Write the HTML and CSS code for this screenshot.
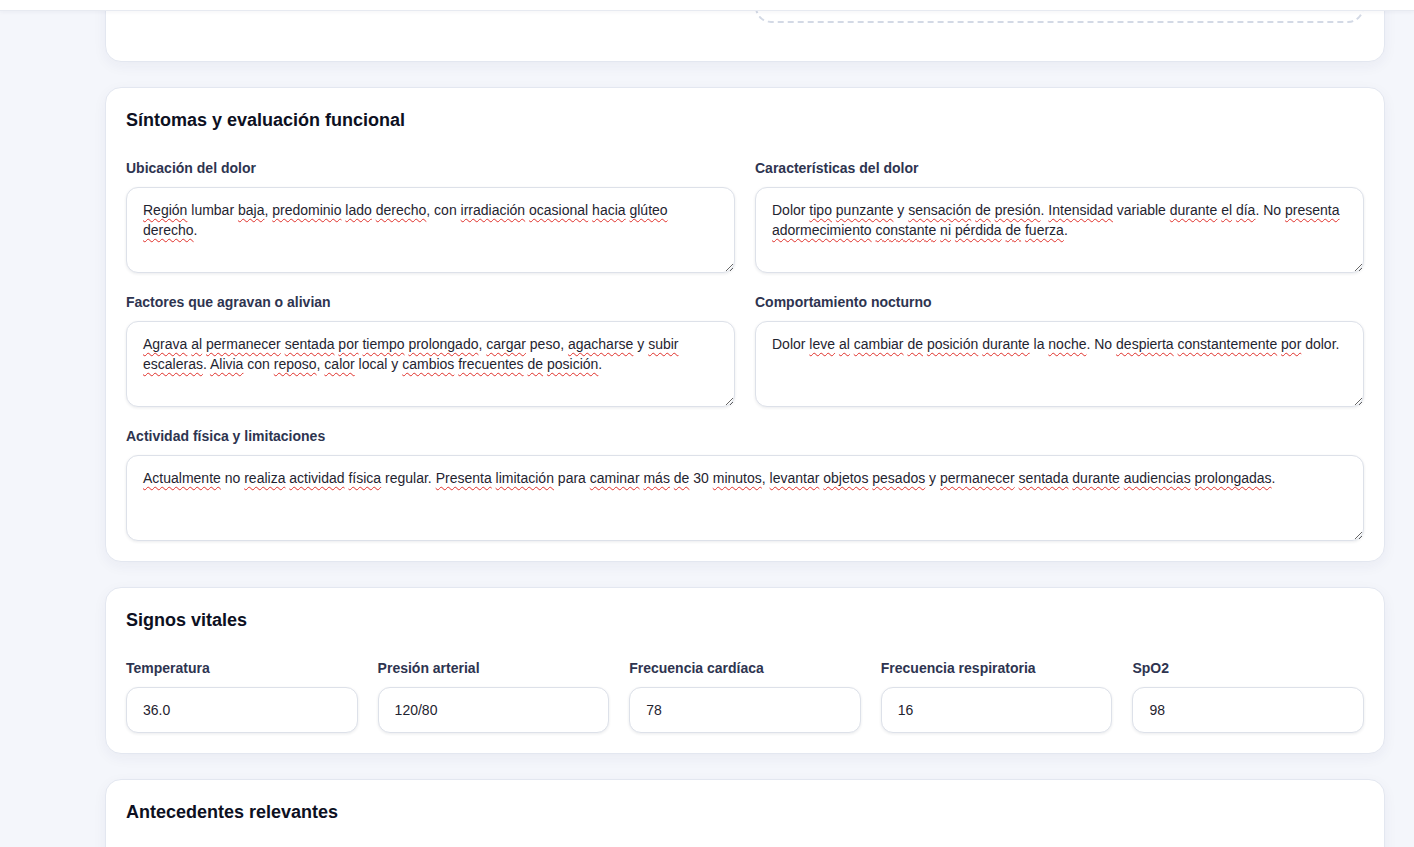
FILE: index.html
```html
<!DOCTYPE html>
<html lang="es">
<head>
    <meta charset="UTF-8">
    <meta name="viewport" content="width=device-width, initial-scale=1.0">
    <title>Historia clínica</title>
    <link rel="stylesheet" href="styles.css">
</head>
<body>
    <div class="topbar"></div>

    <main class="pagina">
        <section class="tarjeta tarjeta-inicio">
            <div class="grid-2">
                <div class="col-vacia"></div>
                <div class="zona-archivo"></div>
            </div>
        </section>

        <section class="tarjeta">
            <h2 class="titulo">Síntomas y evaluación funcional</h2>
            <div class="grid-2">
                <div class="campo">
                    <label>Ubicación del dolor</label>
                    <div class="area" role="textbox"><span class="sp">Región</span> lumbar <span class="sp">baja</span>, <span class="sp">predominio</span> <span class="sp">lado</span> <span class="sp">derecho</span>, con <span class="sp">irradiación</span> <span class="sp">ocasional</span> <span class="sp">hacia</span> <span class="sp">glúteo</span> <span class="sp">derecho</span>.</div>
                </div>
                <div class="campo">
                    <label>Características del dolor</label>
                    <div class="area" role="textbox">Dolor <span class="sp">tipo</span> <span class="sp">punzante</span> y <span class="sp">sensación</span> <span class="sp">de</span> <span class="sp">presión</span>. <span class="sp">Intensidad</span> variable <span class="sp">durante</span> <span class="sp">el</span> <span class="sp">día</span>. No <span class="sp">presenta</span> <span class="sp">adormecimiento</span> <span class="sp">constante</span> <span class="sp">ni</span> <span class="sp">pérdida</span> <span class="sp">de</span> <span class="sp">fuerza</span>.</div>
                </div>
                <div class="campo">
                    <label>Factores que agravan o alivian</label>
                    <div class="area" role="textbox"><span class="sp">Agrava</span> <span class="sp">al</span> <span class="sp">permanecer</span> <span class="sp">sentada</span> <span class="sp">por</span> <span class="sp">tiempo</span> <span class="sp">prolongado</span>, <span class="sp">cargar</span> peso, <span class="sp">agacharse</span> y <span class="sp">subir</span> <span class="sp">escaleras</span>. <span class="sp">Alivia</span> con <span class="sp">reposo</span>, <span class="sp">calor</span> local y <span class="sp">cambios</span> <span class="sp">frecuentes</span> <span class="sp">de</span> <span class="sp">posición</span>.</div>
                </div>
                <div class="campo">
                    <label>Comportamiento nocturno</label>
                    <div class="area" role="textbox">Dolor <span class="sp">leve</span> <span class="sp">al</span> <span class="sp">cambiar</span> <span class="sp">de</span> <span class="sp">posición</span> <span class="sp">durante</span> la <span class="sp">noche</span>. No <span class="sp">despierta</span> <span class="sp">constantemente</span> <span class="sp">por</span> dolor.</div>
                </div>
                <div class="campo ancho">
                    <label>Actividad física y limitaciones</label>
                    <div class="area" role="textbox"><span class="sp">Actualmente</span> no <span class="sp">realiza</span> <span class="sp">actividad</span> <span class="sp">física</span> regular. <span class="sp">Presenta</span> <span class="sp">limitación</span> para <span class="sp">caminar</span> <span class="sp">más</span> <span class="sp">de</span> 30 <span class="sp">minutos</span>, <span class="sp">levantar</span> <span class="sp">objetos</span> <span class="sp">pesados</span> y <span class="sp">permanecer</span> <span class="sp">sentada</span> <span class="sp">durante</span> <span class="sp">audiencias</span> <span class="sp">prolongadas</span>.</div>
                </div>
            </div>
        </section>

        <section class="tarjeta">
            <h2 class="titulo">Signos vitales</h2>
            <div class="grid-5">
                <div class="campo">
                    <label>Temperatura</label>
                    <input class="entrada" type="text" value="36.0">
                </div>
                <div class="campo">
                    <label>Presión arterial</label>
                    <input class="entrada" type="text" value="120/80">
                </div>
                <div class="campo">
                    <label>Frecuencia cardíaca</label>
                    <input class="entrada" type="text" value="78">
                </div>
                <div class="campo">
                    <label>Frecuencia respiratoria</label>
                    <input class="entrada" type="text" value="16">
                </div>
                <div class="campo">
                    <label>SpO2</label>
                    <input class="entrada" type="text" value="98">
                </div>
            </div>
        </section>

        <section class="tarjeta">
            <h2 class="titulo">Antecedentes relevantes</h2>
            <div class="grid-2">
                <div class="area vacia" role="textbox" aria-label="Antecedentes personales"></div>
                <div class="area vacia" role="textbox" aria-label="Antecedentes familiares"></div>
            </div>
        </section>
    </main>
</body>
</html>
```

FILE: styles.css
```css
* {
    margin: 0;
    padding: 0;
    box-sizing: border-box;
}
body {
    font-family: 'Liberation Sans', Arial, sans-serif;
    background-color: #f4f6fb;
    color: #1f2430;
}
.topbar {
    position: fixed;
    top: 0;
    left: 0;
    right: 0;
    height: 11px;
    background-color: #fff;
    border-bottom: 1px solid #e7eaf1;
    box-shadow: 0 1px 4px rgba(30, 40, 70, 0.05);
    z-index: 10;
}
.pagina {
    padding: 0 29px 40px 105px;
    display: flex;
    flex-direction: column;
    gap: 25px;
}
.tarjeta {
    background-color: #fff;
    border: 1px solid #e3e7f0;
    border-radius: 16px;
    padding: 20px;
    box-shadow: 0 4px 14px rgba(30, 45, 90, 0.05);
}
.tarjeta-inicio {
    margin-top: -101px;
}
.titulo {
    font-size: 18px;
    line-height: 24px;
    font-weight: bold;
    color: #0d1022;
    margin-bottom: 27px;
}
.grid-2 {
    display: grid;
    grid-template-columns: 1fr 1fr;
    gap: 20px;
}
.grid-5 {
    display: grid;
    grid-template-columns: repeat(5, 1fr);
    gap: 20px;
}
.campo {
    display: flex;
    flex-direction: column;
}
.campo.ancho {
    grid-column: span 2;
}
.campo label {
    font-size: 14px;
    line-height: 18px;
    font-weight: bold;
    color: #2e3450;
    margin-bottom: 10px;
}
.area {
    height: 86px;
    padding: 12px 16px;
    font-size: 14px;
    line-height: 20px;
    color: #1f2430;
    background-color: #fff;
    border: 1px solid #dde1e9;
    border-radius: 12px;
    box-shadow: 0 1px 3px rgba(20, 30, 60, 0.09);
    resize: vertical;
    overflow: auto;
}
.area.vacia {
    margin-top: 28px;
}
.sp {
    text-decoration: underline wavy #e0302a;
    text-decoration-thickness: 1px;
    text-underline-offset: 3px;
    text-decoration-skip-ink: none;
}
.entrada {
    height: 46px;
    padding: 0 16px;
    font-family: 'Liberation Sans', Arial, sans-serif;
    font-size: 14px;
    color: #1f2430;
    background-color: #fff;
    border: 1px solid #dde1e9;
    border-radius: 12px;
    box-shadow: 0 1px 3px rgba(20, 30, 60, 0.09);
    outline: none;
    width: 100%;
}
.col-vacia {
    height: 103px;
}
.zona-archivo {
    height: 103px;
    border: 2px dashed #d3d9e5;
    border-radius: 16px;
    margin-bottom: 18px;
}
```
